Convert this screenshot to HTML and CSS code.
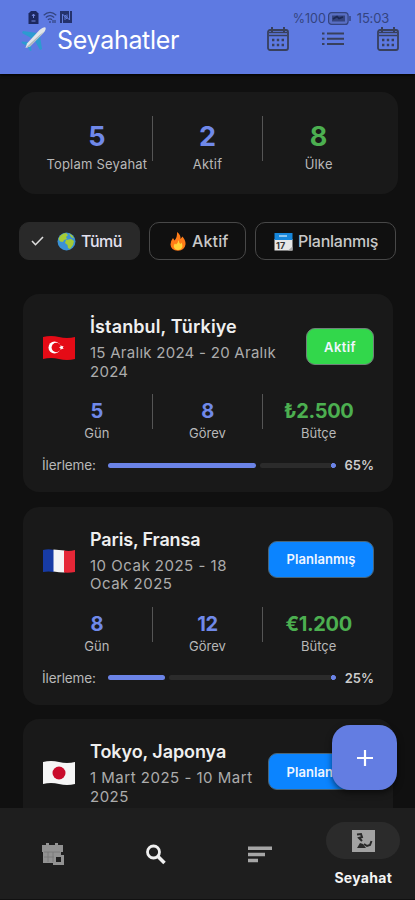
FILE: index.html
```html
<!DOCTYPE html>
<html lang="tr">
<head>
<meta charset="utf-8">
<meta name="viewport" content="width=device-width">
<title>Seyahatler</title>
<link rel="stylesheet" href="styles.css">
</head>
<body>
<svg class="defs" aria-hidden="true">
  <symbol id="calendar" viewBox="0 0 24 26"><path d="M6 1v5M18 1v5" stroke="currentColor" stroke-width="2"/><rect x="2" y="4" width="20" height="20" rx="2" fill="none" stroke="currentColor" stroke-width="1.8"/><path d="M3 6.5h18M3 9.5h18" stroke="currentColor" stroke-width="1.3"/><path d="M6 14h12M6 19h12" stroke="currentColor" stroke-width="2.4" stroke-dasharray="2.4 2.4"/></symbol>
</svg>
<div class="app">
  <header class="header">
    <div class="status">
      <div class="status-left">
        <svg width="11" height="13" viewBox="0 0 11 13"><path d="M3 0h5l2.500 2.500V13H.5V2.500z" fill="#1c285f"/><path d="M5.500 3v4M4 5l1.500-2L7 5M3.500 10h4" stroke="#7185dc" fill="none"/></svg>
        <svg width="14" height="13" viewBox="0 0 14 13"><path d="M.7 4.200Q7-1.300 13.300 4.200M2.800 6.500q4.200-3.600 8.400 0M4.900 8.800q2.100-1.700 4.200 0M7 10v2M10 9v3M12 9v3" stroke="#33447f" stroke-width="1.200" fill="none"/></svg>
        <svg class="nfc" width="12" height="12" viewBox="0 0 12 12"><path d="M0 0h12v12H0z" fill="#24326d"/><path d="M2.500 12V3L7 8V3.500M9.500 0v9L5 4v5" stroke="#637ddb" stroke-width="1" fill="none"/></svg>
      </div>
      <div class="status-right">
        <span class="battery-text">%100</span>
        <svg width="23" height="13" viewBox="0 0 23 13"><rect x=".6" y=".6" width="19.500" height="11.800" rx="3" fill="#596fc4" stroke="#34447f" stroke-width="1.200"/><path d="M22 4v5" stroke="#34447f" stroke-width="1.500"/><path d="M4 3.500h13v6H4z" fill="#34447f"/><path d="M5 7l4-2.500 2 2 4-1.500" stroke="#1b2754" stroke-width="1.600" fill="none"/></svg>
        <span class="clock">15:03</span>
      </div>
    </div>
    <div class="title-row">
      <svg class="plane" width="26" height="26" viewBox="0 0 26 26"><path d="M16 7L2 5 1 7l11 6zM19 10l2 13-2 1-6-11z" fill="#2c9bd0"/><path d="M7 16l-6-.5-.5 1.500 5.500 3zM10 19l.5 5.500L9 25l-3-5z" fill="#2c9bd0"/><path d="M24.500 1.500q1 2-2.500 6L9 20.500 4.500 22 6 17.500 18.500 4q4-3.500 6-2.500z" fill="#e1e5e9"/><path d="M24 5L9 20.500 4.500 22l14-13z" fill="#aab5bf"/></svg>
      <h1>Seyahatler</h1>
      <div class="actions">
        <svg width="24" height="26"><use href="#calendar"/></svg>
        <svg width="22" height="14" viewBox="0 0 22 14"><path d="M0 1.500h2.500M0 6.700h2.500M0 12h2.500M5 1.500h17M5 6.700h17M5 12h17" stroke="#38405c" stroke-width="2"/></svg>
        <svg width="24" height="26"><use href="#calendar"/></svg>
      </div>
    </div>
  </header>
  <main>
    <section class="summary stats">
      <div class="stat"><strong>5</strong><span>Toplam Seyahat</span></div>
      <div class="stat"><strong>2</strong><span>Aktif</span></div>
      <div class="stat green"><strong>8</strong><span>Ülke</span></div>
    </section>
    <div class="chips">
      <div class="chip selected">
        <svg class="check" width="13" height="10" viewBox="0 0 13 10"><path d="M1 5l3.500 3.700L12 1" stroke="#dedede" stroke-width="1.600" fill="none"/></svg>
        <svg width="19" height="19" viewBox="0 0 19 19"><circle cx="9.500" cy="9.500" r="9" fill="#3a91d5"/><path d="M1.500 7Q3 2 9 1l2 2-2 2 1 2-3 1-1 2-3-.5zM9 8l5-1 3 2-1 4-3 4-2-1-.5-3L8 11zM12 1.500q4 1.500 5 5L14 5z" fill="#a5cb35"/></svg>
        <span class="all">Tümü</span>
      </div>
      <div class="chip active">
        <svg width="16" height="19" viewBox="0 0 16 19"><path d="M7 0q4 3 3.500 7l2-2.500Q16 9 15.500 12.500 14.500 18.500 8 18.700.8 18.500.5 12.500.5 9 3 6l1.500 2.500Q7.500 5 7 0z" fill="#ff7c18"/><path d="M8.500 8q.5 3 2 4l1-1.500q2 4-.5 6.500-3 2-6 0-2.500-3 0-5.500l1 1Q8 11 8.500 8z" fill="#ffd338"/></svg>
        <span class="act">Aktif</span>
      </div>
      <div class="chip planned">
        <svg width="19" height="19" viewBox="0 0 19 19"><path d="M.5 7h18v11.500H.5z" fill="#e7e7e7"/><path d="M.5 1h18v7H.5z" fill="#1687dc"/><path d="M5 4h8" stroke="#8ac4ef" stroke-width="2"/><text x="2" y="16.500" class="cal-day">17</text><path d="M14 18.500l4.500-4v4z" fill="#aaa"/></svg>
        <span class="plan">Planlanmış</span>
      </div>
    </div>
    <section class="cards">
      <article class="card istanbul">
        <div class="card-head">
          <svg class="flag" width="34" height="26" viewBox="0 0 34 26"><path d="M1 2q8-2 16 0t16 0v22q-8 2-16 0T1 24z" fill="#e50b16"/><circle cx="12.500" cy="12.500" r="6" fill="#fff"/><circle cx="14.300" cy="12.500" r="4.700" fill="#e50b16"/><path d="M17 12.500l1.500-.8.2-1.700 1.200 1.200 1.700-.3-.8 1.600.8 1.600-1.700-.3-1.200 1.200-.2-1.700z" fill="#fff"/></svg>
          <div class="info"><h2>İstanbul, Türkiye</h2><p>15 Aralık 2024 - 20 Aralık<br>2024</p></div>
          <span class="badge on">Aktif</span>
        </div>
        <div class="stats details">
          <div class="stat"><strong>5</strong><span>Gün</span></div>
          <div class="stat"><strong>8</strong><span>Görev</span></div>
          <div class="stat green"><strong>₺2.500</strong><span>Bütçe</span></div>
        </div>
        <div class="progress"><span class="label">İlerleme:</span><div class="bar"><i class="fill" style="width:65%"></i><i class="rest"></i></div><b>65%</b></div>
      </article>
      <article class="card paris">
        <div class="card-head">
          <svg class="flag" width="34" height="26" viewBox="0 0 34 26"><path d="M1 2q5.500-1.300 11 0v22q-5.500-1-11 0z" fill="#173ba5"/><path d="M11.500 1.500q5.500.3 11 1v22q-5.500-.2-11-1z" fill="#f4f4f6"/><path d="M22 2.500q5.500 1 11-.5v22q-5.500 1-11 .5z" fill="#e52737"/></svg>
          <div class="info"><h2>Paris, Fransa</h2><p>10 Ocak 2025 - 18<br>Ocak 2025</p></div>
          <span class="badge">Planlanmış</span>
        </div>
        <div class="stats details">
          <div class="stat"><strong>8</strong><span>Gün</span></div>
          <div class="stat"><strong>12</strong><span>Görev</span></div>
          <div class="stat green"><strong>€1.200</strong><span>Bütçe</span></div>
        </div>
        <div class="progress"><span class="label">İlerleme:</span><div class="bar"><i class="fill" style="width:25%"></i><i class="rest"></i></div><b>25%</b></div>
      </article>
      <article class="card tokyo">
        <div class="card-head">
          <svg class="flag" width="34" height="26" viewBox="0 0 34 26"><path d="M1 2q8-2 16 0t16 0v22q-8 2-16 0T1 24z" fill="#f5f5f5"/><circle cx="17" cy="13" r="6.500" fill="#c90b2b"/></svg>
          <div class="info"><h2>Tokyo, Japonya</h2><p>1 Mart 2025 - 10 Mart<br>2025</p></div>
          <span class="badge">Planlanmış</span>
        </div>
      </article>
    </section>
  </main>
  <button class="fab" aria-label="Ekle"><svg width="18" height="18" viewBox="0 0 18 18"><path d="M9 1v16M1 9h16" stroke="#fff" stroke-width="2.200"/></svg></button>
  <nav class="nav">
    <div class="tab"><svg width="24" height="23" viewBox="0 0 24 23"><path d="M1 2h4V0h3v2h6V0h3v2h5v7h-2v3h3v10H12v-2H2V9H1z" fill="#929292"/><path d="M7 9v10M12 9v10M3 14h10M3 9h16" stroke="#777" stroke-width=".8"/><path d="M15 14h5v5h-5z" fill="#1e1e1e"/></svg></div>
    <div class="tab"><svg width="22" height="22" viewBox="0 0 22 22"><circle cx="8.500" cy="8" r="6" fill="none" stroke="#efefef" stroke-width="2.800"/><path d="M12.500 12l7 7" stroke="#efefef" stroke-width="3.500"/></svg></div>
    <div class="tab"><svg width="24" height="17" viewBox="0 0 24 17"><path d="M0 2.200h24M0 8.500h17M0 14.500h10" stroke="#a6a6a6" stroke-width="3.600"/></svg></div>
    <div class="tab current"><span class="pill"><svg width="23" height="22" viewBox="0 0 23 22"><path d="M0 0h23v22H0z" fill="#a2a2a2"/><path d="M5 4.500l4-.5 1 3-3 1 3 3M12 14l3 2 3-1 1.500-4" stroke="#292929" stroke-width="2" fill="none"/><path d="M5 18l3-5 3 1 3 4z" fill="#292929"/></svg></span><span>Seyahat</span></div>
  </nav>
</div>
</body>
</html>
```
FILE: styles.css
```css
* { box-sizing: border-box; }
body { margin: 0; background: #101010; font-family: Inter, "Noto Sans", sans-serif; }
h1, h2, p { margin: 0; }
svg { display: block; flex: none; }
.defs { position: absolute; width: 0; height: 0; }
.app { position: relative; width: 415px; height: 900px; overflow: hidden; display: flex; flex-direction: column; }
.header { height: 74px; flex: none; background: #5e7ae2; padding-top: 24px; box-shadow: 0 1px 3px #000; }
.status { position: absolute; top: 11px; left: 28px; right: 26px; display: flex; justify-content: space-between; }
.status-left { display: flex; gap: 4px; }
.nfc { margin-left: -1px; }
.status-right { display: flex; align-items: center; gap: 2px; height: 14px; font-size: 12.5px; color: #34447f; }
.clock { margin-left: 4px; font-size: 13px; letter-spacing: -.2px; }
.title-row { display: flex; align-items: center; height: 30px; padding: 0 15px 0 21px; }
.title-row h1 { color: #fff; font-weight: 400; font-size: 25px; letter-spacing: -.3px; margin-left: 10px; line-height: 30px; padding-top: 1px; }
.actions { margin-left: auto; display: flex; align-items: center; gap: 32px; color: #38405c; }
main { flex: 1; min-height: 0; overflow: hidden; padding-top: 18px; }
.stats { display: grid; grid-template-columns: repeat(3, 1fr); }
.stat { text-align: center; white-space: nowrap; }
.stat:not(:last-child) { border-right: 1px solid #555; }
.stat strong, .stat span { display: block; }
.stat strong { color: #7089e9; font-weight: 700; }
.stat span { color: #b8b8b8; }
.green strong { color: #4caf50; }
.summary { margin: 0 17px 0 19px; background: #191919; height: 102px; border-radius: 16px; padding: 24px 24px 33px 23px; }
.summary .stat { height: 45px; padding-top: 5px; }
.summary strong { font-size: 27px; line-height: 32px; }
.summary span { font-size: 13px; line-height: 18px; margin-top: 2px; letter-spacing: .2px; }
.chips { display: flex; gap: 9px; margin: 28px 19px 0; }
.chip { height: 38px; border-radius: 10px; display: flex; align-items: center; border: 1.500px solid #484848; color: #c8c8c8; font-size: 16px; font-weight: 500; white-space: nowrap; }
.chip.selected { width: 121px; background: #292929; border-color: #292929; padding-left: 11px; color: #e3e1ef; }
.check { margin-right: 13px; }
.chip span { margin-left: 5px; }
.chip.active { width: 97px; padding-left: 20px; }
.chip.planned { width: 141px; padding-left: 18px; }
.all { letter-spacing: -.6px; }
.chip .act { letter-spacing: .15px; margin-left: 6px; }
.plan { letter-spacing: -.25px; }
.cal-day { font-size: 9px; font-weight: 700; fill: #333; }
.cards { margin: 34px 22px 0 23px; display: flex; flex-direction: column; gap: 14.500px; }
.card { height: 198px; flex: none; background: #191919; border-radius: 16px; padding: 21px 19px 0; }
.card-head { height: 66px; display: flex; align-items: center; }
.info { align-self: flex-start; margin-left: 15px; width: 0; white-space: nowrap; }
.info h2 { color: #efefef; font-size: 18px; line-height: 24px; font-weight: 600; }
.info p { color: #acacac; font-size: 15px; line-height: 18.500px; margin-top: 5px; }
.istanbul h2 { letter-spacing: .12px; }
.istanbul p { letter-spacing: .27px; }
.paris h2 { letter-spacing: -.15px; }
.paris p { letter-spacing: .5px; }
.tokyo h2 { letter-spacing: -.08px; }
.tokyo p { letter-spacing: .5px; }
.badge { width: 106px; height: 37px; margin: -3px 0 0 auto; display: flex; align-items: center; justify-content: center; background: #0b84ff; border: 1px solid #496579; border-radius: 9px; color: #f0f5ff; font-size: 13px; font-weight: 600; letter-spacing: .05px; }
.badge.on { width: 68px; background: #32d74b; border-color: #70817a; letter-spacing: .4px; }
.flag { margin-right: -1px; }
.details { margin-top: 13px; }
.details .stat { height: 35px; padding-top: 4px; }
.details strong { font-size: 20px; line-height: 26px; letter-spacing: -.35px; }
.details span { font-size: 13px; line-height: 18px; }
.progress { display: flex; align-items: center; margin-top: 26px; height: 20px; color: #b8b8b8; font-size: 13.500px; }
.label { width: 66px; letter-spacing: -.1px; }
.bar { width: 228px; height: 5px; display: flex; gap: 4px; }
.fill { background: #6b83e6; border-radius: 3px; flex: none; }
.rest { flex: 1; border-radius: 3px; background: radial-gradient(circle at calc(100% - 2.500px) 50%, #6b83e6 2.300px, #2b2b2b 2.800px); }
.progress b { margin-left: auto; font-size: 13px; font-weight: 600; color: #ccc; }
.fab { position: absolute; left: 332px; top: 725px; width: 65px; height: 65px; border: 0; border-radius: 18px; background: #637de2; display: flex; align-items: center; justify-content: center; padding: 0; box-shadow: 0 3px 6px #0008; }
.nav { height: 92px; flex: none; background: #1e1e1e; display: grid; grid-template-columns: repeat(4, 1fr); border-bottom: 1px solid #111; padding-left: 1px; }
.tab { display: flex; align-items: center; justify-content: center; padding-top: 2px; }
.current { flex-direction: column; justify-content: flex-start; padding-top: 14px; color: #f4f4f4; font-size: 14px; font-weight: 700; gap: 10px; line-height: 18px; letter-spacing: .3px; }
.pill { width: 74px; height: 37px; border-radius: 19px; background: #2b2b2b; display: flex; align-items: center; justify-content: center; }
```
